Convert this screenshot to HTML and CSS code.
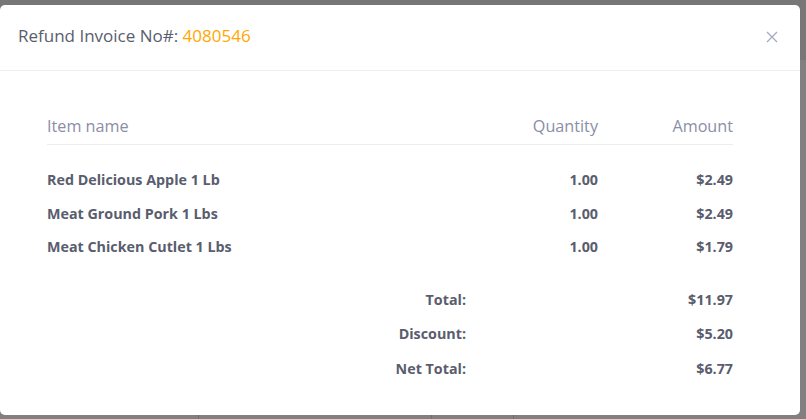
FILE: index.html
```html
<!DOCTYPE html>
<html lang="en">
<head>
<meta charset="utf-8">
<title>Refund Invoice</title>
<link rel="stylesheet" href="styles.css">
</head>
<body>
<div class="page">
  <div class="page-top"></div>
  <div class="page-table">
    <div class="page-col c1"></div>
    <div class="page-col c2"></div>
    <div class="page-col c3"></div>
    <div class="page-col c4"></div>
  </div>
</div>
<div class="modal">
  <div class="modal-header">
    <h5 class="modal-title">Refund Invoice No#: <span class="inv-no">4080546</span></h5>
    <button class="close" type="button" aria-label="Close">
      <svg width="12" height="12" viewBox="0 0 12 12"><path d="M1 1 L11 11 M11 1 L1 11" stroke="currentColor" stroke-width="1.4" fill="none"/></svg>
    </button>
  </div>
  <div class="modal-body">
    <div class="row head">
      <div class="cell name">Item name</div>
      <div class="cell num">Quantity</div>
      <div class="cell num">Amount</div>
    </div>
    <div class="items">
      <div class="row item">
        <div class="cell name">Red Delicious Apple 1 Lb</div>
        <div class="cell num">1.00</div>
        <div class="cell num">$2.49</div>
      </div>
      <div class="row item">
        <div class="cell name">Meat Ground Pork 1 Lbs</div>
        <div class="cell num">1.00</div>
        <div class="cell num">$2.49</div>
      </div>
      <div class="row item">
        <div class="cell name">Meat Chicken Cutlet 1 Lbs</div>
        <div class="cell num">1.00</div>
        <div class="cell num">$1.79</div>
      </div>
    </div>
    <div class="totals">
      <div class="trow"><div class="tlabel">Total:</div><div class="tval">$11.97</div></div>
      <div class="trow"><div class="tlabel">Discount:</div><div class="tval">$5.20</div></div>
      <div class="trow"><div class="tlabel">Net Total:</div><div class="tval">$6.77</div></div>
    </div>
  </div>
</div>
</body>
</html>
```

FILE: styles.css
```css
* { box-sizing: border-box; }
html, body { margin: 0; padding: 0; }
body {
  width: 806px;
  height: 419px;
  overflow: hidden;
  background: #7f7f7f;
  font-family: "Open Sans", "Liberation Sans", sans-serif;
}
.page {
  display: flex;
  flex-direction: column;
  height: 419px;
}
.page-top {
  height: 60px;
  background: #777777;
}
.page-table {
  flex: 1;
  display: grid;
  grid-template-columns: 198px 233px 82px 1fr;
  background: #808080;
}
.page-col { border-left: 1px solid #6e6e6e; }
.page-col.c1 { border-left: none; }
.modal {
  position: fixed;
  left: 0;
  top: 5px;
  width: 800px;
  height: 410px;
  background: #fff;
  border-radius: 5px;
}
.modal-header {
  height: 66px;
  padding: 0 22px 0 18px;
  display: flex;
  align-items: center;
  justify-content: space-between;
  border-bottom: 1px solid #ebedf2;
}
.modal-title {
  margin: 0;
  font-size: 17px;
  font-weight: 400;
  color: #595d6e;
  padding-bottom: 5px;
}
.inv-no { color: #ffa800; }
.close {
  border: 0;
  background: none;
  padding: 0;
  color: #a7abc3;
  display: flex;
  margin-bottom: 2px;
}
.modal-body { padding: 36px 67px 0 47px; }
.row {
  display: grid;
  grid-template-columns: 1fr 130px 135px;
  align-items: center;
}
.cell.num { text-align: right; }
.head {
  height: 38px;
  border-bottom: 1px solid #ebedf2;
  font-size: 16.2px;
  color: #8a8ea6;
}
.items { padding-top: 18px; }
.item {
  height: 33.6px;
  font-size: 14.3px;
  font-weight: 700;
  color: #595d6e;
}
.totals { padding-top: 18px; }
.trow {
  display: grid;
  grid-template-columns: 1fr 267px;
  align-items: center;
  height: 34.6px;
  font-size: 14.3px;
  font-weight: 700;
  color: #595d6e;
  text-align: right;
}
```
